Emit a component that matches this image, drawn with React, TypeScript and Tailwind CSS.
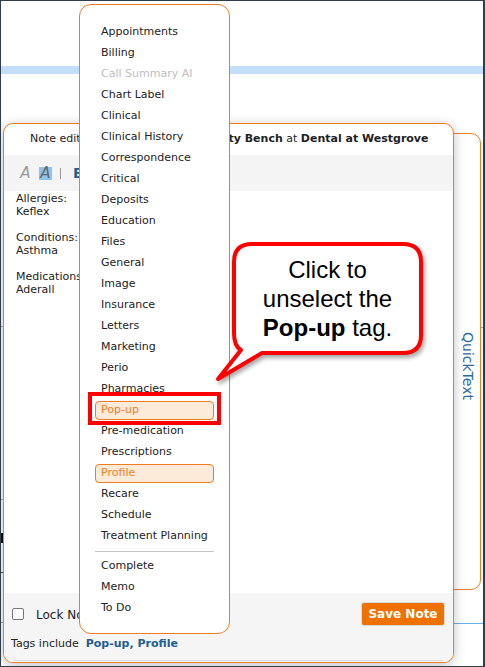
import React from 'react'

const tags = [
  'Appointments',
  'Billing',
  'Call Summary AI',
  'Chart Label',
  'Clinical',
  'Clinical History',
  'Correspondence',
  'Critical',
  'Deposits',
  'Education',
  'Files',
  'General',
  'Image',
  'Insurance',
  'Letters',
  'Marketing',
  'Perio',
  'Pharmacies',
  'Pop-up',
  'Pre-medication',
  'Prescriptions',
  'Profile',
  'Recare',
  'Schedule',
  'Treatment Planning',
]

const statusTags = ['Complete', 'Memo', 'To Do']
const selected = ['Pop-up', 'Profile']
const disabled = ['Call Summary AI']

const font = "font-['DejaVu_Sans',Verdana,sans-serif]"

function TagItem({ label }: { label: string }) {
  const on = selected.includes(label)
  const off = disabled.includes(label)
  return (
    <div className="h-[21px] py-px">
      <div
        className={`h-[19px] flex items-center pl-[5px] rounded-[4px] border ${
          on ? 'border-[#ee7d22] bg-[#fdebd9] text-[#ee7d22]' : off ? 'border-transparent text-[#bdbdbd]' : 'border-transparent text-[#222]'
        }`}
      >
        {label}
      </div>
    </div>
  )
}

function TagMenu() {
  return (
    <div className="absolute left-[79px] top-[4px] w-[151px] h-[630px] z-30 bg-white border border-[#ee7d22] rounded-[12px] pt-[17px] px-[15px] text-[11px]">
      {tags.map((t) => (
        <TagItem key={t} label={t} />
      ))}
      <div className="my-1 h-px bg-[#c4c4c4]" />
      {statusTags.map((t) => (
        <TagItem key={t} label={t} />
      ))}
    </div>
  )
}

function Callout() {
  return (
    <>
      <svg
        className="absolute left-0 top-0 z-40 pointer-events-none drop-shadow-[2px_3px_2px_rgba(0,0,0,0.35)]"
        width="485"
        height="667"
        viewBox="0 0 485 667"
      >
        <path
          d="M252 244 H403 Q421 244 421 262 V335 Q421 353 403 353 H262 L218 379 L241 350 Q234 346 234 333 V262 Q234 244 252 244 Z"
          fill="#fff"
          stroke="#ff0000"
          strokeWidth="4"
          strokeLinejoin="round"
        />
      </svg>
      <div className="absolute left-[232px] top-[255px] w-[191px] z-40 text-center text-[24px] leading-[29px] text-black font-['Liberation_Sans',Arial,sans-serif]">
        Click to
        <br />
        unselect the
        <br />
        <b>Pop-up</b> tag.
      </div>
      <div className="absolute left-[88px] top-[392px] w-[133px] h-[33px] z-40 border-4 border-[#ff0000]" />
    </>
  )
}

function NoteEditor() {
  return (
    <div className="absolute left-[3px] top-[123px] w-[451px] h-[540px] z-20 flex flex-col bg-white border border-[#ee7d22] rounded-[10px] shadow-[0_2px_12px_rgba(0,0,0,0.25)] overflow-hidden text-[11px] text-[#222]">
      <div className="h-[31px] shrink-0 flex items-center pl-[26px] whitespace-nowrap">
        <span>
          Note editing, and re-tagging for <b>Patty Bench</b> at <b>Dental at Westgrove</b>
        </span>
      </div>
      <div className="h-[36px] shrink-0 flex items-center bg-[#f4f4f4] pl-[15px]">
        <span className="w-[13px] text-center italic text-[15px] text-[#9a9a9a]">A</span>
        <span className="ml-[7px] w-[13px] h-[13px] flex items-center justify-center bg-[#8cc4ef] italic text-[15px] text-[#666]">A</span>
        <span className="ml-[8px] w-px h-[11px] bg-[#999]" />
        <span className="ml-[12px] font-bold text-[14px] text-[#1f5f8f]">B</span>
      </div>
      <div className="flex-1 pl-[12px] pt-px leading-[13px] flex flex-col gap-[13px]">
        <div>
          Allergies:
          <br />
          Keflex
        </div>
        <div>
          Conditions:
          <br />
          Asthma
        </div>
        <div>
          Medications:
          <br />
          Aderall
        </div>
      </div>
      <div className="h-[69px] shrink-0 bg-[#f5f5f5] flex flex-col">
        <div className="mt-[9px] h-[24px] flex items-center pl-[8px] pr-[8px]">
          <span className="w-[12px] h-[12px] rounded-[2px] border border-[#777] bg-white" />
          <span className="ml-[12px] mt-[2px] text-[12px]">Lock Note</span>
          <button className="ml-auto h-[24px] w-[84px] rounded-[3px] bg-[#ee7203] border border-[#d9d9d9] text-white font-bold text-[12px]">
            Save Note
          </button>
        </div>
        <div className="mt-[11px] h-[14px] flex items-center pl-[7px]">
          <span>Tags include</span>
          <span className="ml-[7px] font-bold text-[#1f5f8f]">Pop-up, Profile</span>
        </div>
        <div className="mt-[9px] mx-[10px] h-px bg-[#dcdcdc]" />
      </div>
    </div>
  )
}

export default function App() {
  return (
    <div className={`relative w-[485px] h-[667px] overflow-hidden bg-white ${font}`}>
      <div className="pt-[66px]">
        <div className="h-[8px] bg-[#c2def8]" />
      </div>

      {/* bits of the page behind the dialog */}
      <div className="absolute left-0 top-[326px] w-[3px] h-px bg-[#aaa]" />
      <div className="absolute left-0 top-[499px] w-[3px] h-px bg-[#aaa]" />
      <div className="absolute left-[1px] top-[533px] w-[2px] h-[10px] bg-[#111]" />
      <div className="absolute left-0 top-[572px] w-[3px] h-px bg-[#444]" />
      <div className="absolute left-0 top-[622px] w-[3px] h-px bg-[#aaa]" />
      <div className="absolute left-[481px] top-[327px] w-[4px] h-px bg-[#6aaeea]" />
      <div className="absolute left-[454px] top-[623px] w-[30px] h-px bg-[#6aaeea]" />

      <div className="absolute left-[453px] top-[133px] w-[28px] h-[457px] z-10 flex items-center justify-center bg-white border border-[#ee7d22] rounded-r-[10px]">
        <span className="[writing-mode:vertical-rl] mt-[8px] text-[14px] text-[#2c6aa0]">QuickText</span>
      </div>

      <NoteEditor />
      <TagMenu />
      <Callout />

      <div className="absolute inset-0 z-50 pointer-events-none border-t border-l border-b border-r-2 border-[#2f3e4d]" />
    </div>
  )
}
